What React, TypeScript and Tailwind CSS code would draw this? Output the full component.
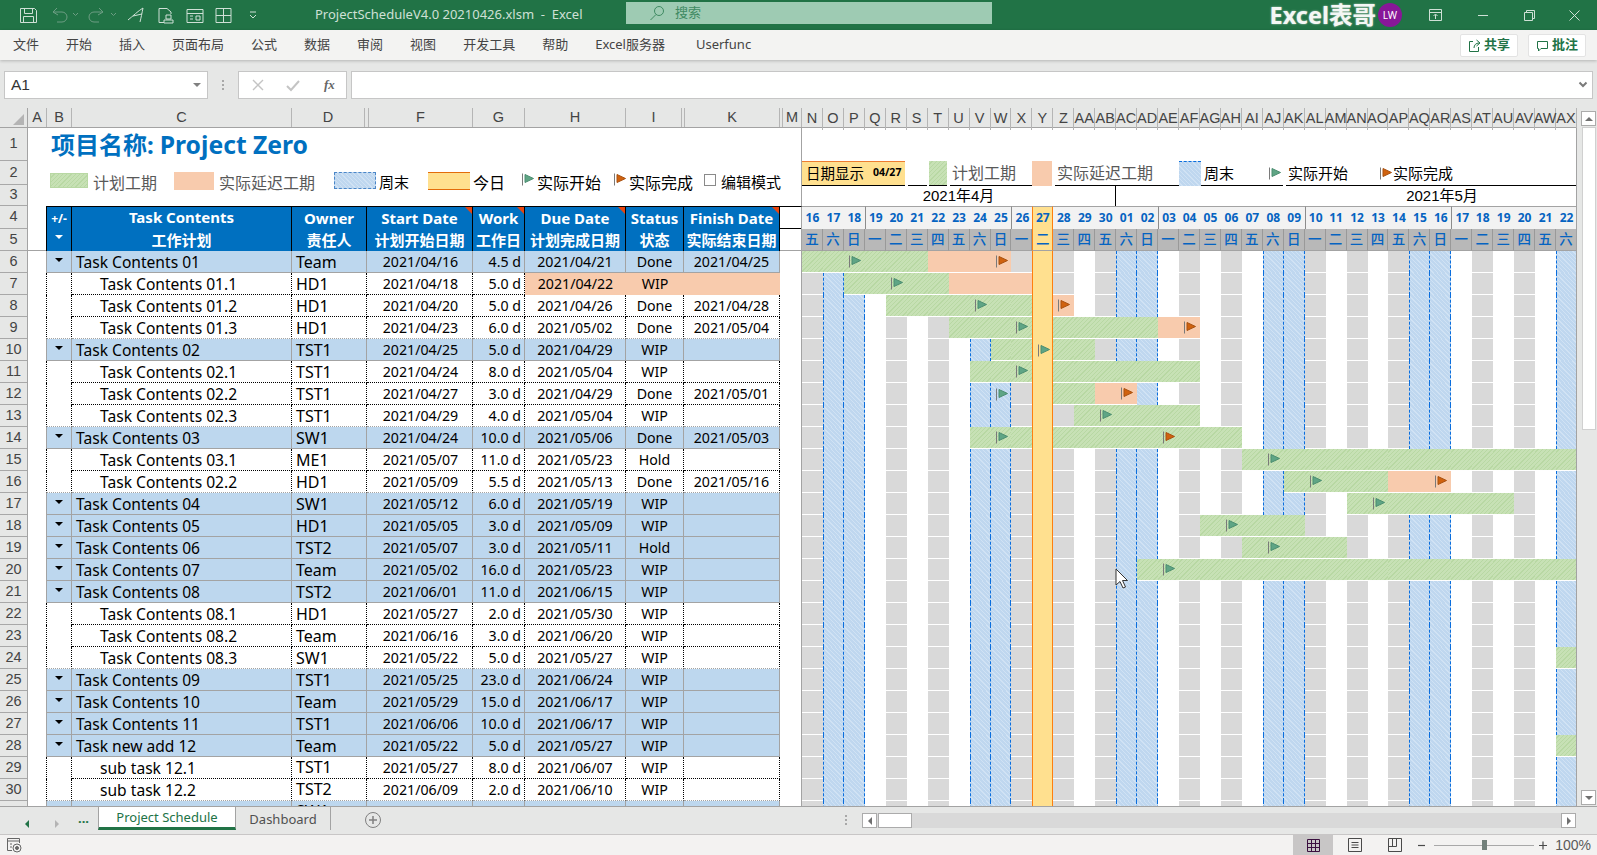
import { ReactNode } from 'react'

interface RowData {
  id: number
  parent?: boolean
  name: string
  owner: string
  start: string
  work: string
  due: string
  status: string
  finish?: string
  late?: boolean
  raised?: boolean
  plan?: [number, number]
  delay?: [number, number]
  startFlag?: number
  endFlag?: number
}

const rows: RowData[] = [
  { id: 6, parent: true, name: 'Task Contents 01', owner: 'Team', start: '2021/04/16', work: '4.5 d', due: '2021/04/21', status: 'Done', finish: '2021/04/25', plan: [0, 5], delay: [6, 9], startFlag: 2, endFlag: 9 },
  { id: 7, name: 'Task Contents 01.1', owner: 'HD1', start: '2021/04/18', work: '5.0 d', due: '2021/04/22', status: 'WIP', late: true, plan: [2, 6], delay: [7, 10], startFlag: 4 },
  { id: 8, name: 'Task Contents 01.2', owner: 'HD1', start: '2021/04/20', work: '5.0 d', due: '2021/04/26', status: 'Done', finish: '2021/04/28', plan: [4, 10], delay: [12, 12], startFlag: 8, endFlag: 12 },
  { id: 9, name: 'Task Contents 01.3', owner: 'HD1', start: '2021/04/23', work: '6.0 d', due: '2021/05/02', status: 'Done', finish: '2021/05/04', plan: [7, 16], delay: [17, 18], startFlag: 10, endFlag: 18 },
  { id: 10, parent: true, name: 'Task Contents 02', owner: 'TST1', start: '2021/04/25', work: '5.0 d', due: '2021/04/29', status: 'WIP', plan: [9, 13], startFlag: 11 },
  { id: 11, name: 'Task Contents 02.1', owner: 'TST1', start: '2021/04/24', work: '8.0 d', due: '2021/05/04', status: 'WIP', plan: [8, 18], startFlag: 10 },
  { id: 12, name: 'Task Contents 02.2', owner: 'TST1', start: '2021/04/27', work: '3.0 d', due: '2021/04/29', status: 'Done', finish: '2021/05/01', plan: [11, 13], delay: [14, 15], startFlag: 9, endFlag: 15 },
  { id: 13, name: 'Task Contents 02.3', owner: 'TST1', start: '2021/04/29', work: '4.0 d', due: '2021/05/04', status: 'WIP', plan: [13, 18], startFlag: 14 },
  { id: 14, parent: true, name: 'Task Contents 03', owner: 'SW1', start: '2021/04/24', work: '10.0 d', due: '2021/05/06', status: 'Done', finish: '2021/05/03', plan: [8, 20], startFlag: 9, endFlag: 17 },
  { id: 15, name: 'Task Contents 03.1', owner: 'ME1', start: '2021/05/07', work: '11.0 d', due: '2021/05/23', status: 'Hold', plan: [21, 36], startFlag: 22 },
  { id: 16, name: 'Task Contents 02.2', owner: 'HD1', start: '2021/05/09', work: '5.5 d', due: '2021/05/13', status: 'Done', finish: '2021/05/16', plan: [23, 27], delay: [28, 30], startFlag: 24, endFlag: 30 },
  { id: 17, parent: true, name: 'Task Contents 04', owner: 'SW1', start: '2021/05/12', work: '6.0 d', due: '2021/05/19', status: 'WIP', plan: [26, 33], startFlag: 27 },
  { id: 18, parent: true, name: 'Task Contents 05', owner: 'HD1', start: '2021/05/05', work: '3.0 d', due: '2021/05/09', status: 'WIP', plan: [19, 23], startFlag: 20 },
  { id: 19, parent: true, name: 'Task Contents 06', owner: 'TST2', start: '2021/05/07', work: '3.0 d', due: '2021/05/11', status: 'Hold', plan: [21, 25], startFlag: 22 },
  { id: 20, parent: true, name: 'Task Contents 07', owner: 'Team', start: '2021/05/02', work: '16.0 d', due: '2021/05/23', status: 'WIP', plan: [16, 36], startFlag: 17 },
  { id: 21, parent: true, name: 'Task Contents 08', owner: 'TST2', start: '2021/06/01', work: '11.0 d', due: '2021/06/15', status: 'WIP' },
  { id: 22, name: 'Task Contents 08.1', owner: 'HD1', start: '2021/05/27', work: '2.0 d', due: '2021/05/30', status: 'WIP' },
  { id: 23, name: 'Task Contents 08.2', owner: 'Team', start: '2021/06/16', work: '3.0 d', due: '2021/06/20', status: 'WIP' },
  { id: 24, name: 'Task Contents 08.3', owner: 'SW1', start: '2021/05/22', work: '5.0 d', due: '2021/05/27', status: 'WIP', plan: [36, 36] },
  { id: 25, parent: true, name: 'Task Contents 09', owner: 'TST1', start: '2021/05/25', work: '23.0 d', due: '2021/06/24', status: 'WIP' },
  { id: 26, parent: true, name: 'Task Contents 10', owner: 'Team', start: '2021/05/29', work: '15.0 d', due: '2021/06/17', status: 'WIP' },
  { id: 27, parent: true, name: 'Task Contents 11', owner: 'TST1', start: '2021/06/06', work: '10.0 d', due: '2021/06/17', status: 'WIP' },
  { id: 28, parent: true, name: 'Task new add 12', owner: 'Team', start: '2021/05/22', work: '5.0 d', due: '2021/05/27', status: 'WIP', plan: [36, 36] },
  { id: 29, name: 'sub task 12.1', owner: 'TST1', start: '2021/05/27', work: '8.0 d', due: '2021/06/07', status: 'WIP', raised: true },
  { id: 30, name: 'sub task 12.2', owner: 'TST2', start: '2021/06/09', work: '2.0 d', due: '2021/06/10', status: 'WIP', raised: true },
  { id: 31, parent: true, name: '', owner: 'SW1', start: '', work: '', due: '', status: '', raised: true },
]

const letters = 'N O P Q R S T U V W X Y Z AA AB AC AD AE AF AG AH AI AJ AK AL AM AN AO AP AQ AR AS AT AU AV AW AX'.split(' ')
const dayNums = ['16','17','18','19','20','21','22','23','24','25','26','27','28','29','30','01','02','03','04','05','06','07','08','09','10','11','12','13','14','15','16','17','18','19','20','21','22']
const weekNames = ['五','六','日','一','二','三','四']
const TODAY = 11

const greenHatch = 'bg-[repeating-linear-gradient(135deg,#c7e1b5_0px,#c7e1b5_2px,#b8d8a3_2px,#b8d8a3_3px)]'
const blueHatch = 'bg-[repeating-linear-gradient(45deg,#bfd7ef_0px,#bfd7ef_2px,#d0e2f4_2px,#d0e2f4_3px)]'

function cellClass(row: RowData, i: number) {
  if (i === TODAY) return 'bg-[#ffe08f] border-x border-[#ff7f0e]'
  if (row.plan && i >= row.plan[0] && i <= row.plan[1]) return `${greenHatch} border-b border-white`
  if (row.delay && i >= row.delay[0] && i <= row.delay[1]) return 'bg-[#f8cbad] border-b border-white'
  if (i % 7 === 1) return `${blueHatch} border-x border-dashed border-[#0a6ede]`
  if (i % 7 === 2) return `${blueHatch} border-r border-dashed border-[#0a6ede]`
  if (i % 2 === 0) return 'bg-[#d9d9d9] border-b border-white'
  return 'bg-white border-b border-white'
}

function Flag({ color, edge }: { color: string; edge: string }) {
  return (
    <svg width="14" height="13" viewBox="0 0 14 13" className="shrink-0">
      <path d="M0.5 0.5V12.5" stroke="#7a7a7a" strokeWidth="1" />
      <path d="M3 1.5L11.5 5.5L3 9.5Z" fill={color} stroke={edge} strokeWidth="1" />
    </svg>
  )
}

const GreenFlag = () => <Flag color="#5fa585" edge="#4b8d70" />
const OrangeFlag = () => <Flag color="#d0620f" edge="#a8500f" />

function HeaderCell({ top, bottom, width, corner }: { top: ReactNode; bottom: string; width: string; corner?: boolean }) {
  return (
    <div className={`relative ${width} flex flex-col border-r border-black font-bold text-white`}>
      {corner && <div className="absolute right-0 top-0 h-0 w-0 border-t-[7px] border-l-[7px] border-t-[#e8450f] border-l-transparent" />}
      <div className="flex h-[23px] items-center justify-center text-[15px] whitespace-nowrap">{top}</div>
      <div className="flex h-[21px] items-center justify-center text-[15px] whitespace-nowrap">{bottom}</div>
    </div>
  )
}

function DataRow({ row, next }: { row: RowData; next?: RowData }) {
  const solid = row.parent || next?.parent
  const line = solid ? 'border-b border-b-[#a3a3a3]' : 'border-b border-dotted border-b-black'
  const side = row.parent ? 'border-r border-r-[#a3a3a3]' : 'border-r border-dotted border-r-black'
  const bg = row.parent ? 'bg-[#bdd7ee]' : 'bg-white'
  const late = row.late ? 'bg-[#f8cbad]' : `${line} ${side} ${bg}`
  const cell = 'flex items-center whitespace-nowrap overflow-hidden'

  return (
    <div className="flex h-[22px] shrink-0">
      <div className="w-[18px]" />
      <div className={`flex w-[26px] items-center justify-center ${row.parent ? 'border-l border-l-[#a3a3a3]' : 'border-l border-dotted border-l-black'} ${side} ${solid ? 'border-b border-b-[#a3a3a3]' : ''} ${bg}`}>
        {row.parent && <div className="mb-[3px] h-0 w-0 border-x-[4px] border-t-[4px] border-x-transparent border-t-black" />}
      </div>
      <div className={`${cell} w-[220px] pt-[1px] text-[15.6px] leading-[20px] ${row.parent ? 'pl-[4px]' : 'pl-[28px]'} ${line} ${side} ${bg}`}>{row.name}</div>
      <div className={`${cell} w-[75px] pl-[4px] text-[16px] leading-[20px] ${row.raised ? 'items-start' : ''} ${line} ${side} ${bg}`}>{row.owner}</div>
      <div className={`${cell} w-[106px] justify-center pl-[2px] ${line} ${side} ${bg}`}>{row.start}</div>
      <div className={`${cell} w-[52px] justify-end pr-[3px] ${line} ${side} ${bg}`}>{row.work}</div>
      <div className={`${cell} w-[101px] justify-center ${late}`}>{row.due}</div>
      <div className={`${cell} w-[58px] justify-center ${late}`}>{row.status}</div>
      <div className={`${cell} w-[96px] justify-center ${late}`}>{row.finish}</div>
      <div className="w-[22px] border-r border-r-[#a3a3a3]" />
      <div className="grid w-[775px] grid-cols-[repeat(37,minmax(0,1fr))]">
        {letters.map((_, i) => (
          <div key={i} className={`flex items-center pl-[5px] ${cellClass(row, i)}`}>
            {row.startFlag === i && <GreenFlag />}
            {row.endFlag === i && <OrangeFlag />}
          </div>
        ))}
      </div>
    </div>
  )
}

function GanttLegend() {
  return (
    <div className="flex w-[775px] flex-col text-[16px]">
      <div className="h-[33px]" />
      <div className="flex h-[25px]">
        <div className="flex w-[103px] items-center gap-[9px] border-t border-b border-t-[#ed7d31] border-b-black bg-[#ffe08f] pl-[4px] text-[14.5px]">
          <span>日期显示</span>
          <span className="pb-[2px] text-[10.5px] font-bold">04/27</span>
        </div>
        <div className="ml-[3px] w-[19px] border-b border-black" />
        <div className={`ml-[2px] w-[18px] border-b border-black ${greenHatch}`} />
        <div className="ml-[3px] flex w-[82px] items-center border-b border-black pl-[2px] text-[#595959]">计划工期</div>
        <div className="w-[20px] bg-[#f8cbad]" />
        <div className="ml-[3px] flex w-[124px] items-center border-b border-black pl-[2px] text-[#595959]">实际延迟工期</div>
        <div className={`w-[22px] border-t border-dashed border-[#0a6ede] ${blueHatch}`} />
        <div className="flex w-[82px] items-center justify-between border-b border-black pl-[3px] text-[15px]">
          <span>周末</span>
          <span className="ml-[3px]"><GreenFlag /></span>
        </div>
        <div className="ml-[3px] flex w-[291px] items-center border-b border-black pl-[2px] text-[15px]">
          <span>实际开始</span>
          <span className="ml-[32px] mr-[-1px]"><OrangeFlag /></span>
          <span>实际完成</span>
        </div>
      </div>
      <div className="flex h-[20px] items-center text-[15px] [font-family:'Liberation_Sans','Noto_Sans_CJK_SC',sans-serif]">
        <div className="flex h-full w-[314px] items-center justify-center border-r border-black">2021年4月</div>
        <div className="flex h-full flex-1 items-center justify-center pl-[191px]">2021年5月</div>
      </div>
    </div>
  )
}

function TopLegend() {
  return (
    <div className="flex w-[774px] flex-col border-r border-r-[#a3a3a3]">
      <div className="flex h-[33px] items-center gap-[6px] pl-[23px] text-[24px] font-bold text-[#0070c0]">
        <span>项目名称:</span>
        <span className="text-[24.7px]">Project Zero</span>
      </div>
      <div className="flex h-[45px] items-start pt-[10px] pl-[22px] text-[16px]">
        <div className={`mt-[2px] h-[15px] w-[38px] border border-[#b8d8a3] ${greenHatch}`} />
        <span className="ml-[5px] text-[#595959]">计划工期</span>
        <div className="ml-[17px] mt-[1px] h-[18px] w-[40px] bg-[#f8cbad]" />
        <span className="ml-[5px] text-[#595959]">实际延迟工期</span>
        <div className={`ml-[19px] mt-[1px] h-[17px] w-[42px] border border-dashed border-[#4a86c8] ${blueHatch}`} />
        <span className="ml-[3px] text-[15px]">周末</span>
        <div className="ml-[19px] mt-[1px] h-[18px] w-[42px] border-y border-[#e36c0a] bg-[#ffe08f]" />
        <span className="ml-[3px]">今日</span>
        <span className="ml-[17px] mt-[2px] mr-[1px]"><GreenFlag /></span>
        <span>实际开始</span>
        <span className="ml-[13px] mt-[2px] mr-[1px]"><OrangeFlag /></span>
        <span>实际完成</span>
        <div className="ml-[11px] mt-[3px] h-[12px] w-[12px] border border-[#8a8a8a] bg-white" />
        <span className="ml-[5px] text-[15px]">编辑模式</span>
      </div>
    </div>
  )
}

function GanttHead() {
  return (
    <div className="grid w-[775px] grid-cols-[repeat(37,minmax(0,1fr))] grid-rows-[23px_22px] font-bold text-[#0563c1]">
      {dayNums.map((d, i) => (
        <div
          key={i}
          className={`flex items-center justify-center border-t border-t-[#a3a3a3] text-[12px] ${i === TODAY ? 'border-x border-x-[#ff7f0e] bg-[#ffe08f]' : 'bg-[#f2f2f2]'} ${i !== TODAY && i % 7 === 3 ? 'border-l border-l-[#8c8c8c]' : ''}`}
        >
          {d}
        </div>
      ))}
      {dayNums.map((_, i) => (
        <div
          key={i}
          className={`flex items-center justify-center border-b border-b-[#a3a3a3] text-[13.5px] font-medium ${i === TODAY ? 'border-x border-x-[#ff7f0e] bg-[#ffe08f]' : 'border-r border-r-[#999999] bg-[#b8b8b8]'}`}
        >
          {weekNames[i % 7]}
        </div>
      ))}
    </div>
  )
}

function TableHead() {
  return (
    <div className="flex h-[45px] shrink-0">
      <div className="w-[18px] border-b border-b-[#a3a3a3]" />
      <div className="flex h-[45px] border-t border-t-black bg-[#0070c0]">
        <div className="flex w-[26px] flex-col items-center border-x border-black text-white">
          <div className="flex h-[23px] items-center text-[12px] font-bold">+/-</div>
          <div className="mt-[5px] h-0 w-0 border-x-[4px] border-t-[4px] border-x-transparent border-t-white" />
        </div>
        <HeaderCell width="w-[220px]" top={<span className="mb-[3px]">Task Contents</span>} bottom="工作计划" />
        <HeaderCell width="w-[75px]" top="Owner" bottom="责任人" />
        <HeaderCell width="w-[106px]" top="Start Date" bottom="计划开始日期" corner />
        <HeaderCell width="w-[52px]" top="Work" bottom="工作日" corner />
        <HeaderCell width="w-[101px]" top="Due Date" bottom="计划完成日期" corner />
        <HeaderCell width="w-[58px]" top="Status" bottom="状态" />
        <HeaderCell width="w-[96px]" top="Finish Date" bottom="实际结束日期" corner />
      </div>
      <div className="flex w-[22px] flex-col border-r border-b border-r-[#a3a3a3] border-b-[#a3a3a3] border-t border-t-black">
        <div className="h-[22px] border-b border-b-black" />
      </div>
      <GanttHead />
    </div>
  )
}

function ColumnHeader() {
  const head = [
    ['A', 'w-[19px]'], ['B', 'w-[25px]'], ['C', 'w-[220px]'], ['D', 'w-[73px]'], ['', 'w-[4px]'], ['F', 'w-[104px]'],
    ['G', 'w-[52px]'], ['H', 'w-[101px]'], ['I', 'w-[56px]'], ['', 'w-[3px]'], ['K', 'w-[95px]'], ['', 'w-[3px]'], ['M', 'w-[19px]'],
  ]
  const cell = 'flex items-center justify-center whitespace-nowrap border-r border-r-[#b5b5b5]'
  return (
    <div className="flex h-[20px] shrink-0 border-b border-b-[#a3a3a3] bg-[#e6e7e6] text-[14.5px] text-[#444444] [font-family:'Liberation_Sans',sans-serif]">
      <div className="flex w-[28px] items-end justify-end border-r border-r-[#a3a3a3] pr-[3px] pb-[2px]">
        <div className="h-0 w-0 border-b-[11px] border-l-[11px] border-b-[#b4b4b4] border-l-transparent" />
      </div>
      {head.map(([label, w], i) => (
        <div key={i} className={`${cell} ${w}`}>{label}</div>
      ))}
      <div className="grid w-[775px] grid-cols-[repeat(37,minmax(0,1fr))]">
        {letters.map(l => (
          <div key={l} className={cell}>{l}</div>
        ))}
      </div>
    </div>
  )
}

function RowHeadings() {
  const items: [number, string][] = [
    [1, 'h-[33px]'], [2, 'h-[24px]'], [3, 'h-[21px]'], [4, 'h-[23px]'], [5, 'h-[22px]'],
  ]
  const cell = 'flex shrink-0 items-center justify-center border-b border-b-[#a8a8a8]'
  return (
    <div className="flex w-[28px] shrink-0 flex-col border-r border-r-[#a3a3a3] bg-[#e6e7e6] text-[14.5px] text-[#444444] [font-family:'Liberation_Sans',sans-serif]">
      {items.map(([n, h]) => (
        <div key={n} className={`${cell} ${h}`}>{n}</div>
      ))}
      {rows.map(r => (
        <div key={r.id} className={`${cell} h-[22px]`}>{r.id}</div>
      ))}
    </div>
  )
}

function TitleBar() {
  const stroke = '#cfe0d6'
  return (
    <div className="relative flex h-[30px] shrink-0 items-center bg-[#217346] text-[13px] text-[#cfe0d6]">
      <div className="flex w-[315px] shrink-0 items-center">
        <svg width="270" height="20" viewBox="0 0 270 20" fill="none" className="ml-[18px]" stroke={stroke} strokeWidth="1">
          <path d="M2.5 3.5H16.5L18.5 5.5V17.5H2.5ZM6.5 3.5V8.5H14.5V3.5M5.5 17.5V11.5H15.5V17.5" />
          <path d="M35 7L39 3M35 7L40 10M35 7H44A5 5 0 0 1 44 17H39" stroke="#6d9d83" />
          <path d="M55 8L57.500 10.500L60 8" stroke="#6d9d83" />
          <path d="M85 7L81 3M85 7L80 10M85 7H76A5 5 0 0 0 76 17H81" stroke="#6d9d83" />
          <path d="M93 8L95.500 10.500L98 8" stroke="#6d9d83" />
          <path d="M110 15C115 11 120 6 125 3C124 8 123 13 122 17M115 11L124 9" />
          <path d="M141 3.500H149L153 7V9M141 3.500V17.500H146M148 10H153V14H148ZM146 15H155V18H146Z" />
          <path d="M169 4.500H185V17.500H169ZM169 8.500H185M172 11H175M178 11H182V15H178ZM172 14H175" />
          <path d="M198 3.500H213V17.500H198ZM205.500 3.500V17.500M198 10.500H213" />
          <path d="M232 7H238M232 10L235 13L238 10" />
        </svg>
      </div>
      <span className="whitespace-pre">ProjectScheduleV4.0 20210426.xlsm  -  Excel</span>
      <div className="absolute left-[626px] top-[2px] flex h-[22px] w-[366px] items-center bg-[#9ecbb3] text-[#3f8a62]">
        <svg width="16" height="16" viewBox="0 0 16 16" fill="none" stroke="#3f8a62" className="ml-[23px]">
          <circle cx="10" cy="6" r="4.500" />
          <path d="M7 9.500L1.500 15" />
        </svg>
        <span className="ml-[10px]">搜索</span>
      </div>
      <div className="ml-auto flex items-center">
        <span className="text-[23.5px] leading-[26px] font-bold text-[#f4f7f5] [text-shadow:0_0_2px_#bcd4c6]">Excel表哥</span>
        <div className="ml-[2px] flex h-[24px] w-[24px] items-center justify-center rounded-full bg-[#881798] text-[10px] text-white">LW</div>
        <svg width="190" height="16" viewBox="0 0 190 16" fill="none" stroke={stroke} className="ml-[3px] mr-[2px]">
          <path d="M24.500 2.500H36.500V13.500H24.500ZM24.500 5.500H36.500M30.500 12V7.500M28.500 9L30.500 7L32.500 9" />
          <path d="M73 8.500H83" />
          <path d="M119.500 5.500H127.500V13.500H119.500ZM121.500 5.500V3.500H129.500V11.500H127.500" />
          <path d="M164.500 3.500L174.500 13.500M174.500 3.500L164.500 13.500" />
        </svg>
      </div>
    </div>
  )
}

function MenuBar() {
  const items = ['文件', '开始', '插入', '页面布局', '公式', '数据', '审阅', '视图', '开发工具', '帮助', 'Excel服务器']
  return (
    <div className="relative z-10 flex h-[30px] shrink-0 items-center bg-[#f3f3f2] pl-[13px] text-[13px] text-[#444444] shadow-[0_1px_3px_rgba(0,0,0,0.22)]">
      <div className="flex gap-[27px]">
        {items.map(m => <span key={m}>{m}</span>)}
        <span className="ml-[4px]">Userfunc</span>
      </div>
      <div className="ml-auto mr-[11px] flex gap-[10px] font-bold text-[#217346]">
        <button className="flex h-[23px] w-[58px] items-center justify-center gap-[3px] rounded-[2px] border border-[#e3e3e3] bg-white">
          <svg width="13" height="13" viewBox="0 0 13 13" fill="none" stroke="#217346">
            <path d="M5 2.500H1.500V12.500H10.500V8M6 9C6 6 8 4 11 4M8.500 1L12 4L8.500 7" />
          </svg>
          共享
        </button>
        <button className="flex h-[23px] w-[58px] items-center justify-center gap-[3px] rounded-[2px] border border-[#e3e3e3] bg-white">
          <svg width="13" height="13" viewBox="0 0 13 13" fill="none" stroke="#217346">
            <path d="M1.500 2.500H11.500V9.500H5L2.500 12V9.500H1.500Z" />
          </svg>
          批注
        </button>
      </div>
    </div>
  )
}

function FormulaBar() {
  return (
    <div className="flex h-[48px] shrink-0 items-start bg-[#e6e7e6] pt-[11px] pl-[4px]">
      <div className="flex h-[28px] w-[204px] items-center justify-between border border-[#c6c6c6] bg-white pl-[6px] pr-[6px] text-[15.5px] text-[#333333] [font-family:'Liberation_Sans',sans-serif]">
        <span>A1</span>
        <div className="h-0 w-0 border-x-[4px] border-t-[4px] border-x-transparent border-t-[#808080]" />
      </div>
      <div className="flex h-[28px] w-[30px] flex-col items-center justify-center gap-[2px]">
        <div className="h-[2px] w-[2px] bg-[#a8a8a8]" />
        <div className="h-[2px] w-[2px] bg-[#a8a8a8]" />
        <div className="h-[2px] w-[2px] bg-[#a8a8a8]" />
      </div>
      <div className="flex h-[28px] w-[109px] items-center border border-[#c6c6c6] bg-white">
        <svg width="70" height="14" viewBox="0 0 70 14" fill="none" stroke="#c4c4c4" strokeWidth="1.400" className="ml-[12px]">
          <path d="M2 2L12 12M12 2L2 12" />
          <path d="M36 8L40 12L48 3" strokeWidth="2" />
        </svg>
        <span className="ml-[3px] text-[13px] font-bold italic text-[#666666] [font-family:'Liberation_Serif',serif]">fx</span>
      </div>
      <div className="ml-[4px] flex h-[28px] flex-1 items-center justify-end border border-[#c6c6c6] bg-white pr-[4px] mr-[4px]">
        <svg width="10" height="8" viewBox="0 0 10 8" fill="none" stroke="#7a7a7a" strokeWidth="2">
          <path d="M1.500 1.500L5 5L8.500 1.500" />
        </svg>
      </div>
    </div>
  )
}

function VerticalScroll() {
  return (
    <div className="flex w-[20px] shrink-0 flex-col items-end bg-[#e6e7e6] pt-[3px] pr-[1px]">
      <div className="flex h-[15px] w-[15px] items-center justify-center border border-[#ababab] bg-white">
        <div className="h-0 w-0 border-x-[4px] border-b-[4px] border-x-transparent border-b-[#707070]" />
      </div>
      <div className="mt-[1px] h-[303px] w-[14px] border border-[#d0d0d0] bg-white" />
      <div className="mt-auto mb-[1px] flex h-[15px] w-[15px] items-center justify-center border border-[#ababab] bg-white">
        <div className="h-0 w-0 border-x-[4px] border-t-[4px] border-x-transparent border-t-[#707070]" />
      </div>
    </div>
  )
}

function TabBar() {
  return (
    <div className="flex h-[28px] shrink-0 items-start border-t border-t-[#a3a3a3] bg-[#e6e7e6] text-[13px] leading-[18px]">
      <div className="flex w-[98px] items-center pt-[8px] pl-[25px]">
        <div className="h-0 w-0 border-y-[4px] border-r-[4px] border-y-transparent border-r-[#217346]" />
        <div className="ml-[26px] h-0 w-0 border-y-[4px] border-l-[4px] border-y-transparent border-l-[#b4b4b4]" />
        <span className="ml-[19px] mt-[-6px] mb-[6px] font-bold text-[#217346]">...</span>
      </div>
      <div className="flex h-[23px] w-[138px] items-center justify-center border-x border-x-[#a3a3a3] border-b-[3px] border-b-[#217346] bg-white text-[#217346]">Project Schedule</div>
      <div className="flex h-[23px] w-[95px] items-center justify-center border-r border-r-[#a3a3a3] text-[#505050]">Dashboard</div>
      <svg width="18" height="18" viewBox="0 0 18 18" fill="none" stroke="#808080" className="ml-[33px] mt-[4px]">
        <circle cx="9" cy="9" r="7.500" />
        <path d="M9 5V13M5 9H13" strokeWidth="1.500" />
      </svg>
      <div className="ml-[463px] mt-[8px] flex flex-col gap-[2px]">
        <div className="h-[2px] w-[2px] bg-[#a8a8a8]" />
        <div className="h-[2px] w-[2px] bg-[#a8a8a8]" />
        <div className="h-[2px] w-[2px] bg-[#a8a8a8]" />
      </div>
      <div className="ml-[15px] mt-[6px] flex h-[15px] w-[714px] bg-[#d9d9d9]">
        <div className="flex w-[15px] items-center justify-center border border-[#ababab] bg-white">
          <div className="h-0 w-0 border-y-[4px] border-r-[4px] border-y-transparent border-r-[#707070]" />
        </div>
        <div className="ml-[1px] w-[34px] border border-[#ababab] bg-white" />
        <div className="ml-auto flex w-[15px] items-center justify-center border border-[#ababab] bg-white">
          <div className="h-0 w-0 border-y-[4px] border-l-[4px] border-y-transparent border-l-[#707070]" />
        </div>
      </div>
    </div>
  )
}

function StatusBar() {
  return (
    <div className="flex h-[21px] shrink-0 items-center border-t border-t-[#c8c6c6] bg-[#f3f2f1]">
      <svg width="15" height="15" viewBox="0 0 15 15" fill="none" stroke="#666666" className="ml-[7px]">
        <path d="M0.500 0.500H12.500V5M0.500 3H12.500M0.500 0.500V12.500H5M3 6H5M3 9H5" />
        <circle cx="10" cy="10" r="4" />
        <circle cx="10" cy="10" r="1.500" fill="#666666" />
      </svg>
      <div className="ml-auto flex h-full w-[40px] items-center justify-center bg-[#c8c6c6]">
        <svg width="13" height="13" viewBox="0 0 13 13" fill="none" stroke="#3b0f3f">
          <path d="M0.500 0.500H12.500V12.500H0.500ZM0.500 4.500H12.500M0.500 8.500H12.500M4.500 0.500V12.500M8.500 0.500V12.500" />
        </svg>
      </div>
      <svg width="240" height="14" viewBox="0 0 240 14" fill="none" stroke="#4a4a4a" className="mr-[22px] ml-[2px] shrink-0">
        <path d="M13.500 0.500H26.500V13.500H13.500ZM16.500 4.500H23.500M16.500 7H23.500M16.500 9.500H23.500" />
        <path d="M53.500 0.500H66.500V13.500H53.500ZM53.500 8.500H61.500V0.500M57.500 0.500V8.500" />
        <path d="M83 7.500H90" strokeWidth="1.200" />
        <path d="M99 7.500H199" stroke="#a8a8a8" />
        <path d="M147 2H152V12H147Z" fill="#72807a" stroke="none" />
        <path d="M204 7.500H212M208 3.500V11.500" strokeWidth="1.200" />
      </svg>
      <span className="absolute right-[6px] text-[14px] text-[#5a5a5a] [font-family:'Liberation_Sans',sans-serif]">100%</span>
    </div>
  )
}

export default function App() {
  return (
    <div className="relative flex h-[855px] w-[1597px] flex-col overflow-hidden bg-white text-black [font-family:'Noto_Sans','Noto_Sans_CJK_SC',sans-serif]">
      <TitleBar />
      <MenuBar />
      <FormulaBar />

      <div className="flex h-[698px] shrink-0">
        <div className="flex w-[1577px] shrink-0 flex-col">
          <ColumnHeader />
          <div className="flex h-[678px] shrink-0 overflow-hidden border-r border-r-[#a3a3a3]">
            <RowHeadings />
            <div className="flex flex-col text-[14.2px]">
              <div className="flex h-[78px] shrink-0">
                <TopLegend />
                <GanttLegend />
              </div>
              <TableHead />
              {rows.map((r, i) => (
                <DataRow key={r.id} row={r} next={rows[i + 1]} />
              ))}
            </div>
          </div>
        </div>
        <VerticalScroll />
      </div>

      <TabBar />
      <StatusBar />

      <svg width="15" height="22" viewBox="0 0 15 22" className="absolute left-[1115px] top-[568px]">
        <path d="M1 1V17L5 13.500L8 20L10.500 19L7.500 12.500H12.500Z" fill="white" stroke="#333333" strokeWidth="1" />
      </svg>
    </div>
  )
}
